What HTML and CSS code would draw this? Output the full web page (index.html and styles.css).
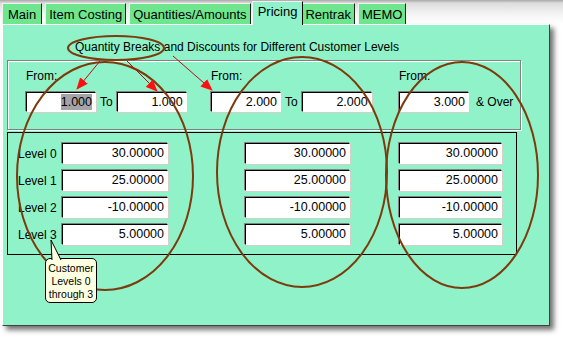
FILE: index.html
```html
<!DOCTYPE HTML>
<html>

<head>
    <meta charset="utf-8">
    <title>Pricing</title>
    <link rel="stylesheet" href="styles.css">
</head>

<body>
    <div class="window">
        <div class="tabs">
            <div class="tab">Main</div>
            <div class="tab">Item Costing</div>
            <div class="tab">Quantities/Amounts</div>
            <div class="tab active">Pricing</div>
            <div class="tab">Rentrak</div>
            <div class="tab">MEMO</div>
        </div>

        <div class="panel">
            <div class="title">Quantity Breaks and Discounts for Different Customer Levels</div>

            <!-- quantity breaks -->
            <div class="breaks">
                <div class="brk">
                    <div class="from">From:</div>
                    <div class="range">
                        <div class="field"><span class="sel">1.000</span></div>
                        <span class="to">To</span>
                        <div class="field">1.000</div>
                    </div>
                </div>
                <div class="brk">
                    <div class="from">From:</div>
                    <div class="range">
                        <div class="field">2.000</div>
                        <span class="to">To</span>
                        <div class="field">2.000</div>
                    </div>
                </div>
                <div class="brk">
                    <div class="from">From:</div>
                    <div class="range">
                        <div class="field">3.000</div>
                        <span class="over">&amp; Over</span>
                    </div>
                </div>
            </div>

            <!-- discounts per level -->
            <div class="levels">
                <div class="level-row">
                    <span class="lbl">Level 0</span>
                    <div class="field c1">30.00000</div>
                    <div class="field c2">30.00000</div>
                    <div class="field c3">30.00000</div>
                </div>
                <div class="level-row">
                    <span class="lbl">Level 1</span>
                    <div class="field c1">25.00000</div>
                    <div class="field c2">25.00000</div>
                    <div class="field c3">25.00000</div>
                </div>
                <div class="level-row">
                    <span class="lbl">Level 2</span>
                    <div class="field c1">-10.00000</div>
                    <div class="field c2">-10.00000</div>
                    <div class="field c3">-10.00000</div>
                </div>
                <div class="level-row">
                    <span class="lbl">Level 3</span>
                    <div class="field c1">5.00000</div>
                    <div class="field c2">5.00000</div>
                    <div class="field c3">5.00000</div>
                </div>
            </div>
        </div>

        <!-- annotations drawn over the form -->
        <svg class="marks" width="563" height="340" viewBox="0 0 563 340">
            <defs>
                <marker id="head" markerWidth="12" markerHeight="10" refX="11" refY="5" orient="auto" markerUnits="userSpaceOnUse">
                    <path d="M0 0 L12 5 L0 10 Z" fill="#ff1010" />
                </marker>
            </defs>
            <g fill="none" stroke="#7d3a0c" stroke-width="2">
                <ellipse cx="116" cy="48" rx="48" ry="12" />
                <ellipse cx="105" cy="176" rx="88" ry="114" />
                <ellipse cx="302" cy="172" rx="85" ry="115" />
                <ellipse cx="462" cy="175" rx="76" ry="113" />
            </g>
            <g stroke="#b01010" stroke-width="1" marker-end="url(#head)">
                <line x1="100" y1="61" x2="77" y2="89" />
                <line x1="127" y1="61" x2="157" y2="91" />
                <line x1="173" y1="56" x2="212" y2="90" />
            </g>
        </svg>

        <div class="callout">
            <svg class="tail" width="14" height="22" viewBox="0 0 14 22">
                <path d="M2 21 L1 1 L11 21" fill="#ffffe1" stroke="#000" stroke-width="1" />
            </svg>
            Customer<br>Levels 0<br>through 3
        </div>
    </div>
</body>

</html>
```

FILE: styles.css
```css
/* page */
* {
    box-sizing: border-box;
}

body {
    margin: 0;
    background-color: #fff;
    font-family: "Liberation Sans", Arial, sans-serif;
    font-size: 12px;
    color: #000;
}

.window {
    position: relative;
    width: 563px;
    height: 340px;
    padding-left: 2px;
    background: linear-gradient(to bottom, #a8a8a8 0, #dcdcdc 3px, #f4f4f4 14px, #fff 24px);
}

/* tabs */
.tabs {
    display: flex;
    align-items: flex-end;
    height: 24px;
}

.tab {
    height: 21px;
    margin-right: 3px;
    padding: 3px 3px 0 3px;
    font-size: 13px;
    line-height: 15px;
    background-color: #6ee68e;
    border-left: 1px solid #f0f0f0;
    border-top: 1px solid #f0f0f0;
    border-right: 1px solid #202020;
    white-space: nowrap;
}

.tab:first-child {
    padding: 3px 5px 0 5px;
}

.tab.active {
    position: relative;
    z-index: 1;
    height: 24px;
    margin: 0 0 -1px -2px;
    padding: 2px 5px 0 5px;
    background-color: #8ff2c8;
    border-right-color: #000;
}

.tab.active + .tab {
    margin-left: -2px;
}

/* tab page */
.panel {
    width: 548px;
    height: 302px;
    padding: 0 0 0 4px;
    background-color: #8ff2c8;
    border-top: 1px solid #fff;
    border-left: 1px solid #fff;
    border-right: 1px solid #404040;
    border-bottom: 1px solid #404040;
    box-shadow: 4px 4px 5px rgba(0, 0, 0, 0.55);
}

.title {
    margin: 15px 0 0 68px;
    line-height: 14px;
    white-space: nowrap;
}

.breaks {
    display: grid;
    grid-template-columns: 185px 188px 1fr;
    width: 514px;
    height: 70px;
    margin-top: 6px;
    padding: 8px 0 0 18px;
    border: 1px solid #808080;
    box-shadow: inset 1px 1px 0 #fff, 1px 1px 0 #fff;
}

.from {
    line-height: 14px;
    margin-bottom: 9px;
}

.range {
    display: flex;
    align-items: center;
}

.to {
    margin: 0 4px;
}

.over {
    margin-left: 7px;
}

/* sunken edit box */
.field {
    width: 70px;
    height: 20px;
    padding: 0 3px;
    text-align: right;
    font-size: 12.5px;
    line-height: 18px;
    background-color: #fff;
    border: 1px solid;
    border-color: #000 #fff #fff #000;
    box-shadow: -1px -1px 0 #808080, 1px 1px 0 #d4d0c8;
}

.sel {
    background-color: #a4a4a8;
    padding: 1px 0;
}

/* levels */
.levels {
    width: 510px;
    height: 123px;
    margin-top: 2px;
    padding: 10px 0 0 10px;
    border: 1px solid #000;
}

.level-row {
    display: flex;
    align-items: center;
    height: 21px;
    margin-bottom: 6px;
}

.lbl {
    width: 44px;
    white-space: nowrap;
}

.level-row .field {
    height: 21px;
    line-height: 19px;
}

.c1 {
    width: 106px !important;
}

.c2 {
    width: 105px !important;
    margin-left: 77px;
}

.c3 {
    width: 103px !important;
    margin-left: 49px;
}

/* annotations */
.marks {
    position: absolute;
    left: 0;
    top: 0;
    z-index: 2;
    pointer-events: none;
}

.callout {
    position: absolute;
    left: 45px;
    top: 258px;
    z-index: 3;
    width: 52px;
    height: 45px;
    padding-top: 3px;
    font-size: 10.5px;
    line-height: 13px;
    text-align: center;
    background-color: #ffffe1;
    border: 1px solid #000;
    border-radius: 5px;
}

.tail {
    position: absolute;
    left: 4px;
    top: -20px;
}
```
